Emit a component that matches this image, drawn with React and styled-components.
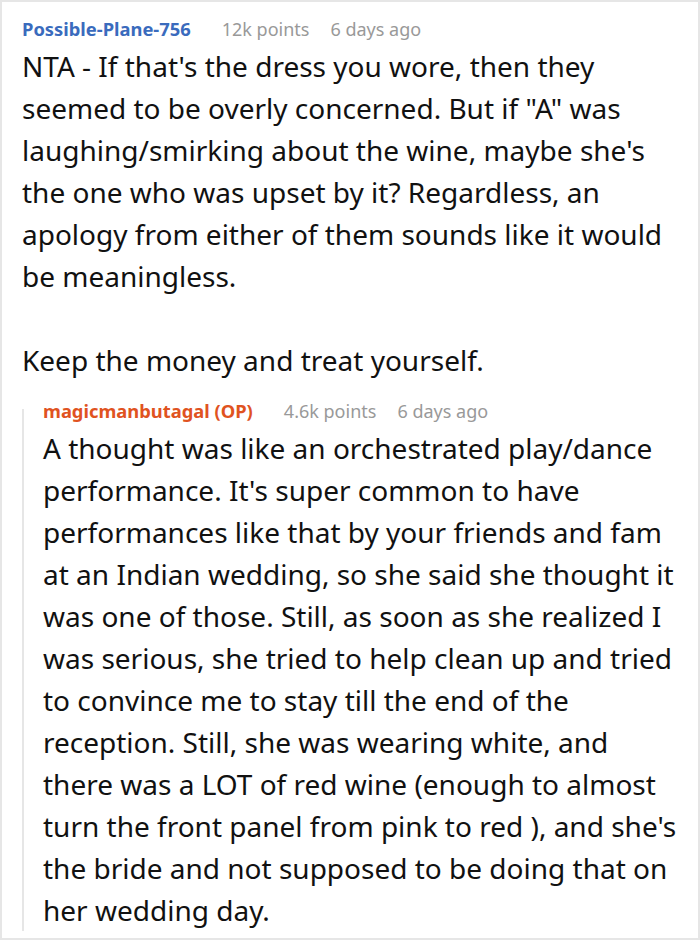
import React from "react";
import styled, { createGlobalStyle } from "styled-components";

const Global = createGlobalStyle`
  html, body { margin: 0; padding: 0; background: #fff; }
  body { font-family: "Noto Sans", "Open Sans", sans-serif; }
`;

const Card = styled.div`
  box-sizing: border-box;
  width: 700px;
  height: 940px;
  border: 2px solid #e6e6e6;
  padding: 15px 10px 0 20px;
  overflow: hidden;
`;

const Header = styled.div`
  display: flex;
  align-items: baseline;
  gap: 21px;
  font-size: 18px;
  line-height: 24px;
  white-space: nowrap;
`;

const User = styled.span`
  font-weight: 700;
  font-size: 18.35px;
  color: ${(p) => (p.$op ? "#e0531f" : "#3a6bbd")};
  margin-right: 10px;
`;

const Meta = styled.span`
  color: #999;
`;

const Body = styled.div`
  font-size: 28px;
  line-height: 42px;
  color: #111;
  margin-top: 4px;
  p { margin: 0; }
  p + p { margin-top: 42px; }
`;

const Reply = styled.div`
  position: relative;
  margin-top: 18px;
  padding: 0 8px 0 21px;
  &::before {
    content: "";
    position: absolute;
    left: 0;
    top: 10px;
    bottom: 0;
    width: 2px;
    background: #e6e6e6;
  }
  ${Body} { margin-top: 4px; }
`;

export default function App() {
  return (
    <>
      <Global />
      <Card>
        <Header>
          <User>Possible-Plane-756</User>
          <Meta>12k points</Meta>
          <Meta>6 days ago</Meta>
        </Header>
        <Body>
          <p>
            NTA - If that's the dress you wore, then they seemed to be overly concerned. But if "A" was laughing/smirking about the wine, maybe she's the one who was upset by it? Regardless, an apology from either of them sounds like it would be meaningless.
          </p>
          <p>Keep the money and treat yourself.</p>
        </Body>
        <Reply>
          <Header>
            <User $op>magicmanbutagal (OP)</User>
            <Meta>4.6k points</Meta>
            <Meta>6 days ago</Meta>
          </Header>
          <Body>
            <p>
              A thought was like an orchestrated play/dance performance. It's super common to have performances like that by your friends and fam at an Indian wedding, so she said she thought it was one of those. Still, as soon as she realized I was serious, she tried to help clean up and tried to convince me to stay till the end of the reception. Still, she was wearing white, and there was a LOT of red wine (enough to almost turn the front panel from pink to red ), and she's the bride and not supposed to be doing that on her wedding day.
            </p>
          </Body>
        </Reply>
      </Card>
    </>
  );
}
